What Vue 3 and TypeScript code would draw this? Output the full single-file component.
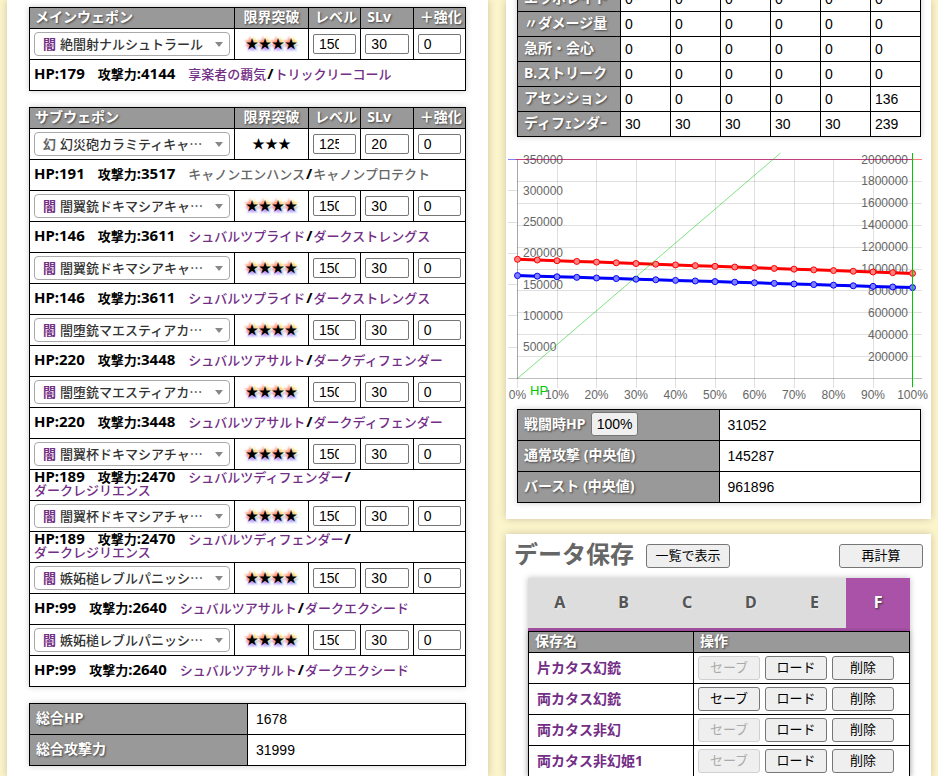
<script setup lang="ts">
import { ref } from 'vue'

interface Weapon {
  element: '闇' | '幻'
  name: string
  stars: number
  level: number
  slv: number
  plus: number
  hp: number
  atk: number
  skills: [string, string]
}

const make = (
  element: Weapon['element'], name: string, hp: number, atk: number,
  skills: [string, string], stars = 4, level = 150, slv = 30,
): Weapon => ({ element, name, stars, level, slv, plus: 0, hp, atk, skills })

const groups = ref<{ title: string; weapons: Weapon[] }[]>([
  {
    title: 'メインウェポン',
    weapons: [make('闇', '絶闇射ナルシュトラール', 179, 4144, ['享楽者の覇気', 'トリックリーコール'])],
  },
  {
    title: 'サブウェポン',
    weapons: [
      make('幻', '幻災砲カラミティキャ…', 191, 3517, ['キャノンエンハンス', 'キャノンプロテクト'], 3, 125, 20),
      make('闇', '闇翼銃ドキマシアキャ…', 146, 3611, ['シュバルツプライド', 'ダークストレングス']),
      make('闇', '闇翼銃ドキマシアキャ…', 146, 3611, ['シュバルツプライド', 'ダークストレングス']),
      make('闇', '闇堕銃マエスティアカ…', 220, 3448, ['シュバルツアサルト', 'ダークディフェンダー']),
      make('闇', '闇堕銃マエスティアカ…', 220, 3448, ['シュバルツアサルト', 'ダークディフェンダー']),
      make('闇', '闇翼杯ドキマシアチャ…', 189, 2470, ['シュバルツディフェンダー', 'ダークレジリエンス']),
      make('闇', '闇翼杯ドキマシアチャ…', 189, 2470, ['シュバルツディフェンダー', 'ダークレジリエンス']),
      make('闇', '嫉妬槌レブルパニッシ…', 99, 2640, ['シュバルツアサルト', 'ダークエクシード']),
      make('闇', '嫉妬槌レブルパニッシ…', 99, 2640, ['シュバルツアサルト', 'ダークエクシード']),
    ],
  },
])

const effects = [
  { label: 'エラボレイト', values: [0, 0, 0, 0, 0, 0] },
  { label: '〃ダメージ量', values: [0, 0, 0, 0, 0, 0] },
  { label: '急所・会心', values: [0, 0, 0, 0, 0, 0] },
  { label: 'B.ストリーク', values: [0, 0, 0, 0, 0, 0] },
  { label: 'アセンション', values: [0, 0, 0, 0, 0, 136] },
  { label: 'ディフｪンダｰ', values: [30, 30, 30, 30, 30, 239] },
]

const tabs = ['A', 'B', 'C', 'D', 'E', 'F']
const activeTab = ref('F')
const saves = [
  { name: '片カタス幻銃', locked: true },
  { name: '両カタス幻銃', locked: false },
  { name: '両カタス非幻', locked: true },
  { name: '両カタス非幻姫1', locked: true },
]

// Chart geometry
const left = 11.5
const right = 406.5
const top = 14.5
const bottom = 233.5
const xAt = (percent: number) => left + ((right - left) * percent) / 100
const yAt = (value: number, max: number) => bottom - ((bottom - top) * value) / max
const snap = (v: number) => Math.floor(v) + 0.5
const percents = Array.from({ length: 11 }, (_, i) => i * 10)
const leftTicks = Array.from({ length: 7 }, (_, i) => (i + 1) * 50000)
const rightTicks = Array.from({ length: 10 }, (_, i) => (i + 1) * 200000)
const series = [
  { color: '#f00', fill: '#ff8080', from: 190500, to: 168000 },
  { color: '#00f', fill: '#8080ff', from: 164500, to: 145287 },
].map((s) => ({
  ...s,
  points: Array.from({ length: 21 }, (_, i) => ({
    x: xAt(i * 5),
    y: yAt(s.from + ((s.to - s.from) * i) / 20, 350000),
  })),
}))
const path = (points: { x: number; y: number }[]) => points.map((p) => `${p.x},${p.y}`).join(' ')
</script>

<template>
  <div class="page" lang="ja">
    <section class="panel weapons">
      <table v-for="(group, g) in groups" :key="g" class="grid">
        <colgroup>
          <col class="c-name"><col class="c-stars"><col class="c-num"><col class="c-slv"><col class="c-num">
        </colgroup>
        <thead>
          <tr>
            <th class="first">{{ group.title }}</th>
            <th class="center">限界突破</th>
            <th>レベル</th>
            <th>SLv</th>
            <th>＋強化</th>
          </tr>
        </thead>
        <tbody>
          <template v-for="(w, i) in group.weapons" :key="i">
            <tr>
              <td class="field">
                <label class="picker">
                  <span :class="w.element === '闇' ? 'dark' : 'phantom'">{{ w.element }}</span>
                  <select aria-label="ウェポン"><option>{{ w.name }}</option></select>
                  <i class="arrow"></i>
                </label>
              </td>
              <td class="stars" :class="{ glow: w.stars === 4 }">{{ '★'.repeat(w.stars) }}</td>
              <td class="field"><input v-model="w.level" type="number" aria-label="レベル"></td>
              <td class="field"><input v-model="w.slv" type="number" aria-label="SLv"></td>
              <td class="field"><input v-model="w.plus" type="number" aria-label="＋強化"></td>
            </tr>
            <tr>
              <td colspan="5" class="stats">
                <span class="latin">HP:{{ w.hp }}</span>　攻撃力<span class="latin">:{{ w.atk }}</span>　<span
                  class="skill" :class="w.element === '闇' ? 'dark' : 'phantom'">{{ w.skills[0] }}</span><span class="latin slash">/</span><wbr><span
                  class="skill" :class="w.element === '闇' ? 'dark' : 'phantom'">{{ w.skills[1] }}</span>
              </td>
            </tr>
          </template>
        </tbody>
      </table>
      <table class="grid totals">
        <tbody>
          <tr><th>総合HP</th><td>1678</td></tr>
          <tr><th>総合攻撃力</th><td>31999</td></tr>
        </tbody>
      </table>
    </section>

    <div class="side">
      <section class="panel results">
        <table class="grid effects">
          <tbody>
            <tr v-for="row in effects" :key="row.label">
              <th>{{ row.label }}</th>
              <td v-for="(v, i) in row.values" :key="i">{{ v }}</td>
            </tr>
          </tbody>
        </table>

        <svg class="chart" viewBox="0 0 425 260" role="img" aria-label="HP">
          <g stroke="#000" stroke-opacity="0.12">
            <line v-for="p in percents" :key="p" :x1="snap(xAt(p))" :x2="snap(xAt(p))" :y1="top" y2="243" />
            <line v-for="t in rightTicks.slice(0, -1)" :key="t" :x1="left" x2="416" :y1="snap(yAt(t, 2000000))" :y2="snap(yAt(t, 2000000))" />
            <line v-for="t in leftTicks.slice(0, -1)" :key="t" x1="2" :x2="left" :y1="snap(yAt(t, 350000))" :y2="snap(yAt(t, 350000))" />
          </g>
          <g stroke="#000" stroke-opacity="0.25">
            <line x1="2" x2="416" :y1="bottom" :y2="bottom" />
            <line :x1="left" :x2="left" :y1="top" :y2="bottom" />
          </g>
          <g class="ticks">
            <text v-for="t in leftTicks" :key="t" x="17" :y="yAt(t, 350000) + 4">{{ t }}</text>
            <text v-for="t in rightTicks" :key="t" x="402" :y="yAt(t, 2000000) + 4" text-anchor="end">{{ t }}</text>
            <text v-for="p in percents" :key="p" :x="xAt(p)" y="254" text-anchor="middle">{{ p }}%</text>
          </g>
          <line x1="2" :x2="right" :y1="top" :y2="top" stroke="#00f" stroke-opacity="0.5" />
          <line :x1="left - 2" x2="416" :y1="top" :y2="top" stroke="#f00" stroke-opacity="0.5" />
          <g v-for="s in [...series].reverse()" :key="s.color">
            <polyline :points="path(s.points)" fill="none" :stroke="s.color" stroke-width="3" />
            <circle v-for="(p, i) in s.points" :key="i" :cx="p.x" :cy="p.y" r="3" :fill="s.fill" :stroke="s.color" />
          </g>
          <line :x1="left" :y1="bottom" x2="274.5" y2="8" stroke="#00c800" stroke-opacity="0.5" />
          <line :x1="right" :x2="right" y1="8" y2="242" stroke="#00c800" />
          <text class="hp" x="24" y="250">HP</text>
        </svg>

        <table class="grid totals">
          <tbody>
            <tr><th>戦闘時HP <button class="percent" type="button">100%</button></th><td>31052</td></tr>
            <tr><th>通常攻撃 (中央値)</th><td>145287</td></tr>
            <tr><th>バースト (中央値)</th><td>961896</td></tr>
          </tbody>
        </table>
      </section>

      <section class="panel saves">
        <header>
          <h2>データ保存</h2>
          <button class="wide" type="button">一覧で表示</button>
          <button class="wide end" type="button">再計算</button>
        </header>
        <div class="box">
          <nav>
            <button v-for="t in tabs" :key="t" type="button" :class="{ active: t === activeTab }" @click="activeTab = t">{{ t }}</button>
          </nav>
          <table class="grid slots">
            <thead><tr><th>保存名</th><th>操作</th></tr></thead>
            <tbody>
              <tr v-for="s in saves" :key="s.name">
                <td class="name dark">{{ s.name }}</td>
                <td>
                  <div class="actions">
                    <button type="button" :disabled="s.locked">セーブ</button>
                    <button type="button">ロード</button>
                    <button type="button">削除</button>
                  </div>
                </td>
              </tr>
            </tbody>
          </table>
        </div>
      </section>
    </div>
  </div>
</template>

<style>
body {
  background: #fcf5cb;
}
</style>

<style scoped>
* {
  box-sizing: border-box;
}
.page {
  display: grid;
  grid-template-columns: 481fr 425fr;
  gap: 18px;
  height: 100vh;
  padding: 0 7px;
  overflow: hidden;
  font: 700 14px/20px "Noto Sans", "Noto Sans CJK JP", sans-serif;
  color: #000;
}
.panel {
  background: #fff;
  box-shadow: 0 0 8px rgba(0, 0, 0, 0.2);
}
.weapons {
  display: flex;
  flex-direction: column;
  gap: 16px;
  min-height: 100vh;
  padding: 7px 22px;
}
.grid {
  width: 100%;
  table-layout: fixed;
  border-collapse: collapse;
  box-shadow: 0 0 6px rgba(0, 0, 0, 0.2);
}
.grid th,
.grid td {
  height: 31px;
  padding: 0;
  border: 1px solid #000;
  text-align: left;
  vertical-align: middle;
}
.grid th {
  padding: 0 0 2px 6px;
  background: #999;
  color: #fff;
  text-shadow: 1px 1px 2px #444;
  white-space: nowrap;
}
.grid thead th {
  height: 21px;
  line-height: 16px;
}
.grid thead th.first {
  padding-left: 5px;
}
.grid thead th.center {
  padding-left: 0;
  text-align: center;
}
.c-name { width: 47%; }
.c-stars { width: 17%; }
.c-num { width: 12%; }
.c-slv { width: 12%; }
.grid .field {
  padding: 0 4px;
}
.picker {
  display: flex;
  align-items: center;
  height: 24px;
  padding: 0 6px 0 8px;
  border: 1px solid #aaa;
  border-radius: 4px;
  font-size: 13px;
}
.picker select {
  flex: 1;
  min-width: 0;
  padding: 0 0 0 4px;
  border: 0;
  appearance: none;
  background: none;
  color: #333;
  font: 500 13px/20px "Noto Sans CJK JP", sans-serif;
}
.arrow {
  border: 4px solid transparent;
  border-top: 5px solid #888;
  border-bottom: 0;
}
.dark {
  color: #732e86;
}
.phantom {
  color: #666;
}
.grid .stars {
  padding-bottom: 2px;
  font: 400 13px/20px "Noto Sans CJK JP", sans-serif;
  text-align: center;
}
.glow {
  text-shadow: -2px -2px 2px #f98, 2px -2px 2px #fe8, -1px 2px 2px #c9f, 2px 2px 2px #9bf;
}
input {
  display: block;
  width: 100%;
  height: 20px;
  padding: 1px 1px 1px 5px;
  border: 1px solid #767676;
  border-radius: 2px;
  background: #fff;
  color: #000;
  font: 14px "Liberation Sans", sans-serif;
}
input::-webkit-inner-spin-button {
  width: 15px;
  opacity: 0;
}
.grid .stats {
  padding: 0 4px 2px;
  font-size: 13px;
  line-height: 13px;
}
.latin {
  font-size: 15px;
  line-height: 0;
}
.slash {
  padding: 0 1px;
}
.skill {
  font-weight: 500;
  white-space: nowrap;
}
.totals td,
.effects td {
  font: 14px/20px "Liberation Sans", sans-serif;
}
.totals th {
  width: 50%;
}
.grid.totals td {
  padding-left: 8px;
}
.side {
  display: flex;
  flex-direction: column;
  gap: 15px;
}
.results {
  padding-bottom: 16px;
}
.results .grid {
  width: calc(100% - 21px);
  margin: 0 10px 0 11px;
}
.results .effects {
  margin-top: -14px;
}
.grid.effects th {
  width: 103px;
}
.grid.effects th,
.grid.effects td {
  height: 25px;
}
.grid.effects td {
  padding-left: 4px;
}
.chart {
  display: block;
  width: 100%;
  margin: 8px 0 4px;
}
.ticks {
  fill: #666;
  font: 12px "Liberation Sans", sans-serif;
}
.hp {
  fill: #00c800;
  font: 13px "Liberation Sans", sans-serif;
}
button {
  height: 24px;
  padding: 0 0 2px;
  border: 1px solid #767676;
  border-radius: 3px;
  background: #efefef;
  color: #000;
  font: 13px/20px "Noto Sans CJK JP", sans-serif;
}
button:disabled {
  border-color: #d0d0d0;
  color: #aaa;
}
.percent {
  width: 47px;
  margin-left: 2px;
  padding: 0;
  font: 14px/20px "Liberation Sans", sans-serif;
}
.saves {
  flex: 1;
}
.saves header {
  display: flex;
  align-items: center;
  gap: 12px;
  height: 44px;
  padding: 0 8px;
}
h2 {
  margin: 0;
  padding-bottom: 4px;
  color: #666;
  font-size: 24px;
  line-height: 32px;
}
.wide {
  width: 84px;
}
.end {
  margin-left: auto;
}
.box {
  margin: 0 21px 0 22px;
  box-shadow: 0 0 6px rgba(0, 0, 0, 0.25);
}
nav {
  display: flex;
  border-bottom: 3px solid #a952a8;
  background: #ddd;
}
nav button {
  flex: 1;
  height: 50px;
  border: 0;
  border-radius: 0;
  background: #ddd;
  color: #555;
  font: 700 16px/20px "Noto Sans", sans-serif;
  text-shadow: 1px 1px 2px #eee;
}
nav .active {
  background: #a952a8;
  color: #fff;
  text-shadow: 1px 1px 2px #333;
}
.slots th:first-child {
  width: 165px;
}
.grid .name {
  padding-left: 8px;
}
.actions {
  display: flex;
  gap: 5px;
  padding-left: 4px;
}
.actions button {
  width: 62px;
}
</style>
